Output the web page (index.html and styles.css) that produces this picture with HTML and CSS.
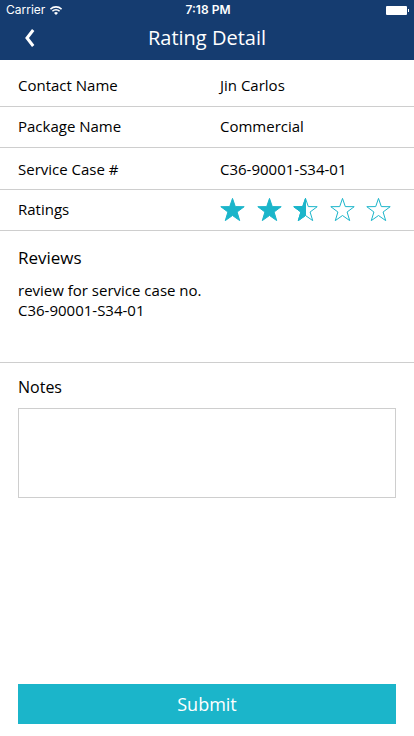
FILE: index.html
```html
<!DOCTYPE html>
<html lang="en">
<head>
<meta charset="utf-8">
<meta name="viewport" content="width=device-width, initial-scale=1">
<title>Rating Detail</title>
<link rel="stylesheet" href="styles.css">
</head>
<body>
<header class="header">
  <div class="status">
    <div class="carrier">
      <span>Carrier</span>
      <svg class="wifi" viewBox="0 0 12 9" aria-hidden="true">
        <path d="M.4 3.2a7.9 7.9 0 0 1 11.2 0M2.4 5.2a5.1 5.1 0 0 1 7.2 0" fill="none" stroke="currentColor" stroke-width="1.6"/>
        <path d="M6 9 4 7a2.9 2.9 0 0 1 4 0z" fill="currentColor"/>
      </svg>
    </div>
    <span class="clock">7:18 PM</span>
    <svg class="battery" viewBox="0 0 24 10" aria-hidden="true">
      <rect y="1" width="21" height="9" rx="1" fill="currentColor"/>
      <rect x="22" y="4" width="1" height="3" fill="currentColor"/>
    </svg>
  </div>
  <div class="navbar">
    <button class="back" type="button" aria-label="Back">
      <svg viewBox="0 0 10 18" aria-hidden="true"><path d="M8.2 1 2 9l6.2 8" fill="none" stroke="currentColor" stroke-width="3"/></svg>
    </button>
    <h1 class="title">Rating Detail</h1>
  </div>
</header>
<main class="content">
  <svg class="defs" aria-hidden="true">
    <defs>
      <path id="star" d="M12.5 1.4 15.3 9.6 24.2 9.7 17.1 15 19.7 23.6 12.5 18.5 5.3 23.6 7.9 15 .8 9.7 9.7 9.6Z"/>
    </defs>
  </svg>
  <dl class="details">
    <div class="row row-first"><dt>Contact Name</dt><dd>Jin Carlos</dd></div>
    <div class="row row-raised"><dt>Package Name</dt><dd>Commercial</dd></div>
    <div class="row row-case"><dt>Service Case #</dt><dd>C36-90001-S34-01</dd></div>
    <div class="row row-raised">
      <dt>Ratings</dt>
      <dd class="stars" role="img" aria-label="2.5 out of 5">
        <svg class="star" viewBox="0 0 25 25"><use class="full" href="#star"/></svg>
        <svg class="star" viewBox="0 0 25 25"><use class="full" href="#star"/></svg>
        <svg class="star" viewBox="0 0 25 25"><use href="#star"/><path class="full" d="M12.5 1.4V18.5L5.3 23.6 7.9 15 .8 9.7 9.7 9.6Z"/></svg>
        <svg class="star" viewBox="0 0 25 25"><use href="#star"/></svg>
        <svg class="star" viewBox="0 0 25 25"><use href="#star"/></svg>
      </dd>
    </div>
  </dl>
  <section class="reviews">
    <h2 class="heading heading-large">Reviews</h2>
    <p class="review">review for service case no.<br>C36-90001-S34-01</p>
  </section>
  <form class="form">
    <label class="heading" for="notes">Notes</label>
    <textarea class="notes" id="notes"></textarea>
    <button class="submit" type="submit">Submit</button>
  </form>
</main>
</body>
</html>
```

FILE: styles.css
```css
* {
  box-sizing: border-box;
}

body {
  display: flex;
  flex-direction: column;
  min-height: 100vh;
  margin: 0;
  background: #fff;
  color: #000;
  font-family: "Open Sans", sans-serif;
  font-size: 15px;
  line-height: 20px;
}

.header {
  background: #153c70;
  color: #fff;
}

.status {
  display: grid;
  grid-template-columns: 1fr auto 1fr;
  align-items: center;
  height: 20px;
  padding: 0 4px 0 6px;
  font-family: Inter, sans-serif;
  font-size: 12px;
}

.carrier {
  display: flex;
  align-items: center;
  gap: 5px;
}

.wifi {
  width: 12px;
  height: 9px;
}

.clock {
  font-weight: 600;
}

.battery {
  justify-self: end;
  width: 24px;
  height: 10px;
}

.navbar {
  display: grid;
  grid-template-columns: 48px 1fr 48px;
  align-items: center;
  height: 40px;
  padding-bottom: 4px;
}

.back {
  display: flex;
  justify-content: flex-end;
  padding: 0 13px;
  border: 0;
  background: none;
  color: inherit;
}

.back svg {
  width: 10px;
  height: 18px;
}

.title {
  margin: 0;
  font-size: 20px;
  font-weight: 400;
  line-height: 28px;
  text-align: center;
}

.content {
  display: flex;
  flex: 1;
  flex-direction: column;
}

.defs {
  display: none;
}

.details {
  margin: 0;
}

.row {
  display: grid;
  grid-template-columns: 202fr 176fr;
  align-items: center;
  min-height: 41px;
  padding: 0 18px;
  border-bottom: 1px solid #cecece;
}

.row-first {
  min-height: 47px;
  padding-top: 4px;
}

.row-raised {
  padding-bottom: 2px;
}

.row-case {
  min-height: 42px;
}

.row dd {
  margin: 0;
}

.stars {
  display: flex;
  justify-content: space-between;
  padding-right: 5px;
}

.star {
  width: 25px;
  height: 25px;
  fill: none;
  stroke: #1bb5ca;
}

.full {
  fill: #1bb5ca;
}

.reviews {
  min-height: 132px;
  padding: 15px 18px;
  border-bottom: 1px solid #cecece;
}

.heading {
  margin: 0;
  font-size: 16px;
  font-weight: 400;
  line-height: 24px;
}

.heading-large {
  font-size: 17px;
}

.review {
  margin: 10px 0 0;
}

.form {
  display: flex;
  flex: 1;
  flex-direction: column;
  padding: 12px 18px;
}

.notes {
  height: 90px;
  margin: 9px 0 24px;
  padding: 8px;
  border: 1px solid #cecece;
  border-radius: 0;
  outline: 0;
  resize: none;
  font: inherit;
}

.submit {
  height: 40px;
  margin-top: auto;
  padding: 0;
  border: 0;
  background: #1bb5ca;
  color: #fff;
  font-family: inherit;
  font-size: 18px;
}
```
